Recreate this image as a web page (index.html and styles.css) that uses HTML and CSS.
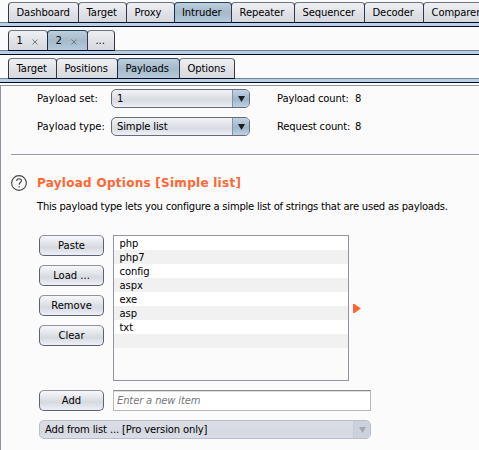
FILE: index.html
```html
<!DOCTYPE html>
<html lang="en">
<head>
<meta charset="utf-8">
<title>Intruder</title>
<link rel="stylesheet" href="styles.css">
</head>
<body>
<nav class="tabs">
  <div class="tab w-dashboard">Dashboard</div><div class="tab w-target">Target</div><div class="tab w-proxy">Proxy</div><div class="tab w-intruder selected">Intruder</div><div class="tab w-repeater">Repeater</div><div class="tab w-sequencer">Sequencer</div><div class="tab w-decoder">Decoder</div><div class="tab w-comparer">Comparer</div>
</nav>
<nav class="tabs">
  <div class="tab w-one">1<svg class="close" viewBox="0 0 6 6"><path d="M.5.5l5 5M5.5.5l-5 5"/></svg></div><div class="tab w-two selected">2<svg class="close" viewBox="0 0 6 6"><path d="M.5.5l5 5M5.5.5l-5 5"/></svg></div><div class="tab w-more">...</div>
</nav>
<nav class="tabs">
  <div class="tab w-sub-target">Target</div><div class="tab w-positions">Positions</div><div class="tab w-payloads selected">Payloads</div><div class="tab w-options">Options</div>
</nav>
<main class="panel">
  <section class="sets">
    <span>Payload set:</span>
    <div class="combo"><span>1</span><i class="drop"><svg viewBox="0 0 7 6"><path d="M0 0h7L3.5 6z"/></svg></i></div>
    <span class="count">Payload count:</span><span>8</span>
    <span>Payload type:</span>
    <div class="combo"><span>Simple list</span><i class="drop"><svg viewBox="0 0 7 6"><path d="M0 0h7L3.5 6z"/></svg></i></div>
    <span class="count">Request count:</span><span>8</span>
  </section>
  <hr>
  <header class="heading">
    <svg class="help" viewBox="0 0 16 16"><circle cx="8" cy="8" r="7.4"/><path d="M5.7 6.1c0-3 4.7-3 4.7-.3 0 1.7-2.3 1.8-2.3 4M8.1 11v1.4"/></svg>
    <h1>Payload Options [Simple list]</h1>
  </header>
  <p class="intro">This payload type lets you configure a simple list of strings that are used as payloads.</p>
  <section class="editor">
    <div class="buttons">
      <button>Paste</button>
      <button>Load ...</button>
      <button>Remove</button>
      <button>Clear</button>
    </div>
    <ul class="list">
      <li>php</li><li>php7</li><li>config</li><li>aspx</li><li>exe</li><li>asp</li><li>txt</li><li></li>
    </ul>
    <svg class="arrow" viewBox="0 0 8 9"><path d="M0 0h1.5L8 4.5 1.5 9H0z"/></svg>
  </section>
  <section class="add">
    <button>Add</button>
    <div class="field">Enter a new item</div>
  </section>
  <div class="combo disabled"><span>Add from list ... [Pro version only]</span><i class="drop"><svg viewBox="0 0 7 6"><path d="M0 0h7L3.5 6z"/></svg></i></div>
</main>
</body>
</html>
```

FILE: styles.css
```css
* { box-sizing: border-box; }
body {
  margin: 0;
  width: 479px;
  height: 450px;
  overflow: hidden;
  background: #fbfbfb;
  color: #000;
  font: 10px/14px "DejaVu Sans", sans-serif;
}
.tabs {
  display: flex;
  height: 28px;
  padding: 2px 0 0 8px;
  overflow: hidden;
  background: linear-gradient(#fbfbfb 22px, #6f8296 22px 23px, #b8cfe5 23px 26px, #020822 26px 27px, #fbfbfb 27px);
}
.tab {
  flex: none;
  display: flex;
  align-items: center;
  height: 21px;
  padding-left: 7.5px;
  margin-right: -1px;
  border: 1px solid #34374a;
  border-top-color: #72757f;
  border-bottom-color: #050b22;
  border-radius: 4px 4px 0 0;
  background: linear-gradient(#eef0f3, #dfe0e5 60%, #d8d9df);
  letter-spacing: -0.1px;
  white-space: nowrap;
}
.tab.selected {
  border-color: #24445f #122d4a #050b22;
  background: linear-gradient(#bdcedc, #a4bacb 50%, #b5c9d9);
}
.w-dashboard { width: 71px; }
.w-target { width: 49px; }
.w-proxy { width: 49px; }
.w-intruder { width: 58px; padding-left: 7px; }
.w-repeater { width: 64px; }
.w-sequencer { width: 71px; }
.w-decoder { width: 60px; }
.w-comparer { width: 66px; }
.w-one { width: 40px; }
.w-two { width: 41px; }
.w-more { width: 28px; }
.w-sub-target { width: 49px; }
.w-positions { width: 62px; }
.w-payloads { width: 63px; }
.w-options { width: 56px; }
.close { width: 6px; height: 6px; margin: 2px 0 0 9px; fill: none; stroke: #777; }
.panel {
  height: 365px;
  margin-top: 1px;
  padding: 3px 0 0 10px;
  border: solid #9293a3;
  border-width: 1px 0 0 1px;
}
.sets {
  display: grid;
  grid-template-columns: 74px 166px 78px auto;
  grid-auto-rows: 19px;
  row-gap: 9px;
  align-items: center;
  padding-left: 26px;
  white-space: nowrap;
}
.count { letter-spacing: -0.15px; }
.combo {
  display: flex;
  align-items: center;
  width: 139px;
  height: 19px;
  padding-left: 5px;
  overflow: hidden;
  border: 1px solid #686c7a;
  border-radius: 5px;
  background: linear-gradient(#f2f3f6, #d8dbe2 60%, #edf0f5);
  letter-spacing: -0.14px;
  white-space: nowrap;
}
.drop {
  display: flex;
  align-items: center;
  justify-content: center;
  width: 17px;
  height: 19px;
  margin-left: auto;
  border-left: 1px solid #7f94a8;
  background: linear-gradient(#c5d5e3, #9fb5c9 55%, #c0d6e8);
}
.drop svg { width: 7px; height: 6px; fill: #1d1d20; }
hr { height: 1px; margin: 18px 0 0; border: 0; background: #9899aa; }
.heading { display: flex; align-items: center; height: 16px; margin-top: 20px; }
.help { width: 16px; height: 16px; fill: none; stroke: #444; stroke-width: 1.1; }
h1 { margin: 0 0 0 10px; color: #ff6633; font-size: 12px; line-height: 16px; letter-spacing: 0.27px; white-space: nowrap; }
.intro { margin: 9px 0 0 26px; letter-spacing: -0.23px; white-space: nowrap; }
.editor { display: flex; height: 146px; margin: 21px 0 0 28px; }
.buttons { display: flex; flex-direction: column; gap: 9px; width: 74px; }
button {
  width: 65px;
  height: 21px;
  padding: 0;
  border: 1px solid #5d6170;
  border-top-color: #9092a0;
  border-radius: 5px;
  background: linear-gradient(#f7f8fa, #d6d9e0 60%, #edf0f5);
  color: #000;
  font: inherit;
}
.list {
  width: 236px;
  height: 146px;
  margin: 0;
  padding: 0;
  border: 1px solid #9293a3;
  list-style: none;
  background: #fbfbfb;
}
.list li { height: 14px; padding: 1px 0 0 5.5px; background: #fff; letter-spacing: -0.1px; }
.list li:nth-child(even) { background: #f1f1f1; }
.arrow { width: 8px; height: 9px; margin: 69px 0 0 4px; fill: #ff6633; }
.add { display: flex; gap: 9px; margin: 9px 0 9px 28px; }
.field {
  width: 258px;
  height: 21px;
  padding: 3px;
  border: 1px solid #b9b9b9;
  border-top: 1px solid #8d8d8d;
  background: linear-gradient(#ddd 1px, #fff 1px);
  color: #777;
  font-style: italic;
  letter-spacing: -0.15px;
}
.combo.disabled { width: 332px; margin-left: 28px; border-color: #b9bdca; background: linear-gradient(#dcdee5, #d7d9e1 60%, #d9dde5); }
.disabled .drop { border-color: #c5ccd8; background: #cbd2de; }
.disabled .drop svg { fill: #a3a6ab; }
```
